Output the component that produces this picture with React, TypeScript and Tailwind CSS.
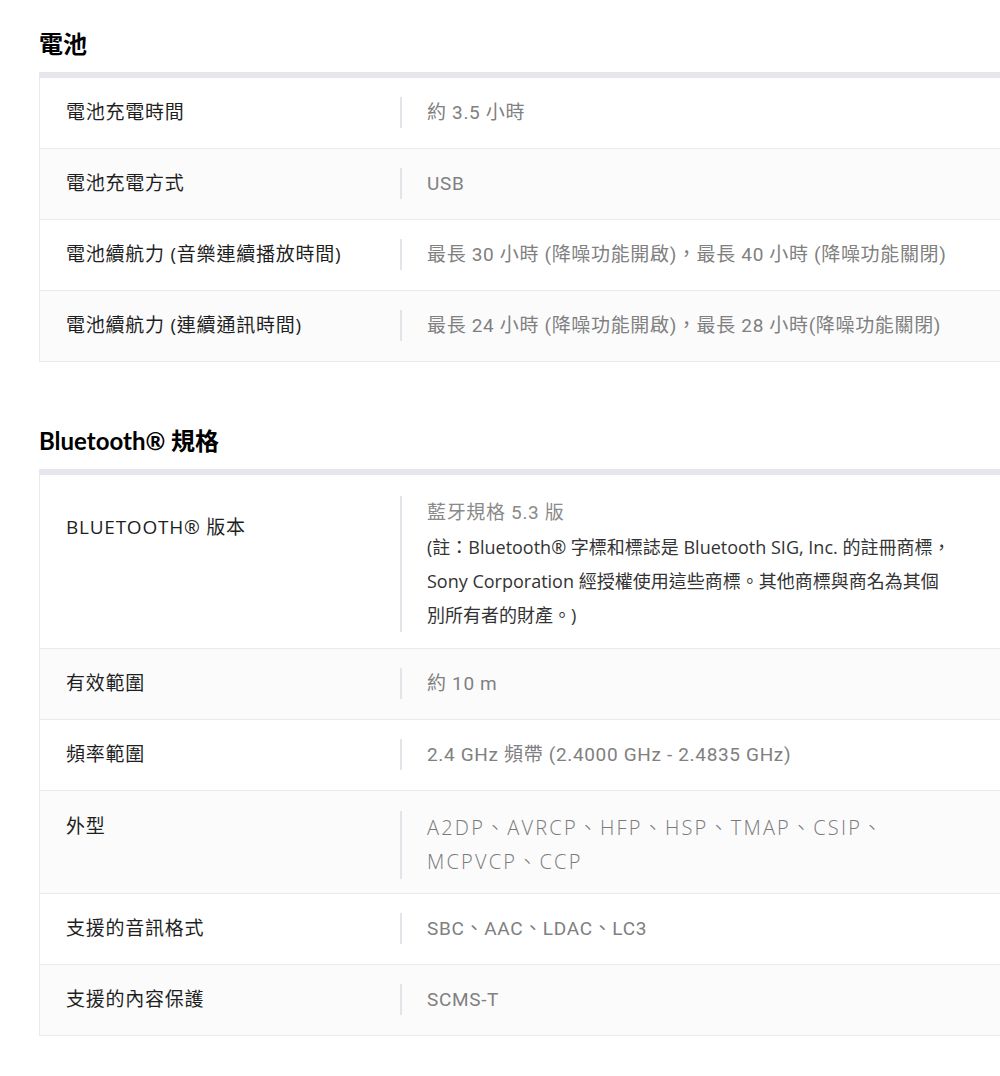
const cjk = '"Noto Sans CJK TC", sans-serif'

type Row = {
  label: string
  value: React.ReactNode
  labelPad?: string
  rowPad?: string
}

const battery: Row[] = [
  { label: '電池充電時間', value: '約 3.5 小時' },
  { label: '電池充電方式', value: 'USB' },
  { label: '電池續航力 (音樂連續播放時間)', value: '最長 30 小時 (降噪功能開啟)，最長 40 小時 (降噪功能關閉)' },
  { label: '電池續航力 (連續通訊時間)', value: '最長 24 小時 (降噪功能開啟)，最長 28 小時(降噪功能關閉)' },
]

const bluetooth: Row[] = [
  {
    label: 'BLUETOOTH® 版本',
    labelPad: 'pt-[16px]',
    rowPad: 'pt-[21px] pb-[16px]',
    value: (
      <div className="leading-[34px]">
        <div className="text-[#8a8a8a]">藍牙規格 5.3 版</div>
        <div className="text-[18px] tracking-normal text-[#333]" style={{ fontFamily: `"Open Sans", ${cjk}` }}>
          (註：Bluetooth® 字標和標誌是 Bluetooth SIG, Inc. 的註冊商標，
          <br />
          Sony Corporation 經授權使用這些商標。其他商標與商名為其個
          <br />
          別所有者的財產。)
        </div>
      </div>
    ),
  },
  { label: '有效範圍', value: '約 10 m' },
  { label: '頻率範圍', value: '2.4 GHz 頻帶 (2.4000 GHz - 2.4835 GHz)' },
  {
    label: '外型',
    rowPad: 'pt-[20px] pb-[14px]',
    value: (
      <div
        className="text-[20px] leading-[34px] font-light tracking-[0.11em] text-[#7a7a7a]"
        style={{ fontFamily: `"Open Sans", ${cjk}` }}
      >
        A2DP、AVRCP、HFP、HSP、TMAP、CSIP、
        <br />
        MCPVCP、CCP
      </div>
    ),
  },
  { label: '支援的音訊格式', value: 'SBC、AAC、LDAC、LC3' },
  { label: '支援的內容保護', value: 'SCMS-T' },
]

function SpecTable({ rows }: { rows: Row[] }) {
  return (
    <div className="border-t-[6px] border-[#e6e6ec]">
      {rows.map((r, i) => (
        <div
          key={r.label}
          className={`flex items-start border-b border-l border-[#e9e9ef] ${r.rowPad ?? 'pt-[19px] pb-[20px]'} ${
            i % 2 === 1 ? 'bg-[#fbfbfc]' : 'bg-white'
          }`}
        >
          <div
            className={`w-[360px] shrink-0 pl-[26px] text-[19px] leading-[31px] tracking-[0.04em] text-[#1f1f1f] ${r.labelPad ?? ''}`}
            style={{ fontFamily: `"Open Sans", ${cjk}` }}
          >
            {r.label}
          </div>
          <div
            className="border-l-2 border-[#e3e3e9] pl-[25px] text-[19px] leading-[31px] tracking-[0.035em] text-[#808080]"
            style={{ fontFamily: `Roboto, ${cjk}` }}
          >
            {r.value}
          </div>
        </div>
      ))}
    </div>
  )
}

function Section({ title, rows, className }: { title: string; rows: Row[]; className?: string }) {
  return (
    <section className={className}>
      <h2
        className="mb-[12px] text-[24px] leading-[32px] font-bold text-black"
        style={{ fontFamily: `Lato, ${cjk}` }}
      >
        {title}
      </h2>
      <SpecTable rows={rows} />
    </section>
  )
}

export default function App() {
  return (
    <div className="h-[1076px] w-[1000px] overflow-hidden bg-white pt-[28px]">
      <div className="ml-[39px] w-[1000px]">
        <Section title="電池" rows={battery} />
        <Section title="Bluetooth® 規格" rows={bluetooth} className="mt-[63px]" />
      </div>
    </div>
  )
}
